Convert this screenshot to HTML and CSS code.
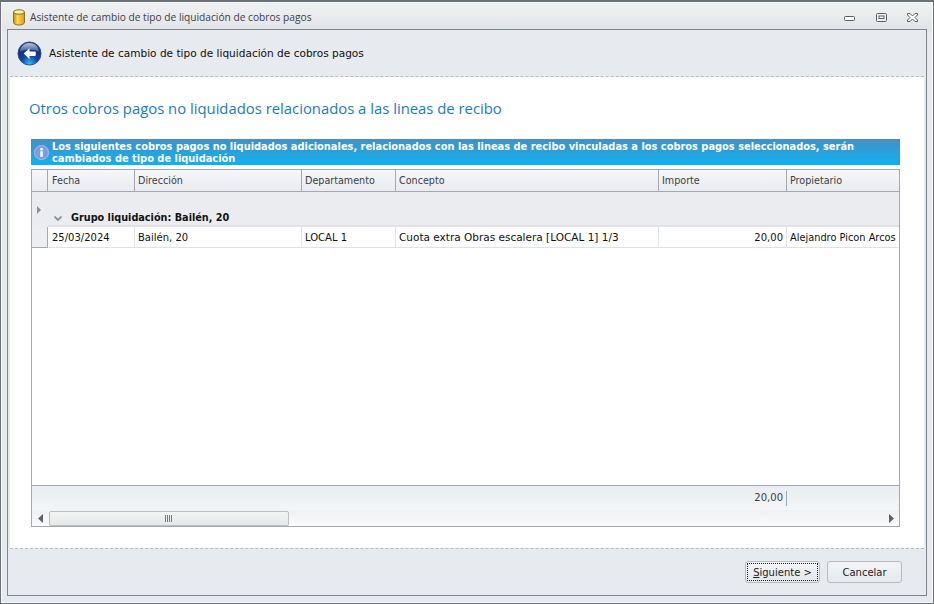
FILE: index.html
```html
<!DOCTYPE html>
<html lang="es">
<head>
<meta charset="utf-8">
<title>Asistente de cambio de tipo de liquidación de cobros pagos</title>
<link rel="stylesheet" href="styles.css">
</head>
<body>
<div class="window">
  <div class="titlebar">
    <svg class="app-icon" width="14" height="17" viewBox="0 0 14 17">
      <defs><linearGradient id="cyl" x1="0" x2="1" y1="0" y2="0"><stop offset="0" stop-color="#c08e14"/><stop offset=".35" stop-color="#fbd550"/><stop offset="1" stop-color="#d99c12"/></linearGradient></defs>
      <path d="M1.500 3v10.500c0 1.300 2.400 2.500 5.500 2.500s5.500-1.200 5.500-2.500V3z" fill="url(#cyl)" stroke="#8f7020"/>
      <ellipse cx="7" cy="3" rx="5.500" ry="2.200" fill="#fdf0a8" stroke="#8f7020"/>
    </svg>
    <span class="title">Asistente de cambio de tipo de liquidación de cobros pagos</span>
    <div class="controls">
      <svg class="ctl-min" width="11" height="6" viewBox="0 0 11 6"><rect x=".5" y=".5" width="10" height="4" rx="1" fill="#fff" stroke="#5c6066"/></svg>
      <svg class="ctl" width="11" height="9" viewBox="0 0 11 9"><rect x=".5" y=".5" width="10" height="8" rx="1" fill="#eef0f2" stroke="#5c6066"/><rect x="3" y="3" width="5" height="2.500" fill="#fff" stroke="#5c6066" stroke-width="1"/></svg>
      <svg class="ctl" width="11" height="9" viewBox="0 0 11 9"><path d="M.5.5h2.500L5.500 3 8 .5h2.500v1.500L8 4.500 10.500 7v1.500H8L5.500 6 3 8.500H.5V7L3 4.500.5 2z" fill="#fff" stroke="#5c6066" stroke-linejoin="round"/></svg>
    </div>
  </div>
  <div class="panel">
    <div class="wizard-head">
      <svg class="back" width="25" height="25" viewBox="0 0 26 26">
        <defs>
          <radialGradient id="orb" cx=".5" cy=".95" r=".8"><stop offset="0" stop-color="#2cc4f4"/><stop offset=".45" stop-color="#1244a6"/><stop offset="1" stop-color="#16296b"/></radialGradient>
          <linearGradient id="gloss" x1="0" x2="0" y1="0" y2="1"><stop offset="0" stop-color="#d4dff2"/><stop offset="1" stop-color="#4465ac"/></linearGradient>
        </defs>
        <circle cx="13" cy="13" r="12" fill="url(#orb)" stroke="#3c4f80" stroke-width="1"/>
        <path d="M3 11C3.500 5.500 8 2 13 2s9.500 3.500 10 9c-5-2.500-15-2.500-20 0z" fill="url(#gloss)" opacity=".85"/>
        <path d="M7 13l6-5.500V11h5.500q1 0 1 1v2.500q0 1-1 1H13V19z" fill="#fff"/>
      </svg>
      <span class="head-text">Asistente de cambio de tipo de liquidación de cobros pagos</span>
    </div>
    <div class="content">
      <h1 class="heading">Otros cobros pagos no liquidados relacionados a las lineas de recibo</h1>
      <div class="banner">
        <svg class="info" width="15" height="15" viewBox="0 0 15 15">
          <circle cx="7.500" cy="7.500" r="7" fill="#7d9be0" stroke="#a9bdec"/>
          <rect x="6.300" y="6.300" width="2.500" height="5.500" fill="#fff"/>
          <circle cx="7.500" cy="4.200" r="1.400" fill="#fff"/>
        </svg>
        <p class="banner-text">Los siguientes cobros pagos no liquidados adicionales, relacionados con las lineas de recibo vinculadas a los cobros pagos seleccionados, serán cambiados de tipo de liquidación</p>
      </div>
      <div class="grid">
        <div class="grid-main">
          <div class="indicator">
            <div class="ind-head"></div>
            <div class="ind-group"><svg width="4" height="8" viewBox="0 0 4 8"><path d="M0 0l4 4-4 4z" fill="#8a9099"/></svg></div>
            <div class="ind-row"></div>
          </div>
          <div class="grid-cols">
            <div class="row head-row">
              <div class="hcell first">Fecha</div><div class="hcell">Dirección</div><div class="hcell">Departamento</div><div class="hcell">Concepto</div><div class="hcell">Importe</div><div class="hcell last">Propietario</div>
            </div>
            <div class="group-row">
              <svg width="8" height="5" viewBox="0 0 8 5"><path d="M.5.500L4 4 7.500.5" fill="none" stroke="#8a9099" stroke-width="1.800"/></svg>
              <span>Grupo liquidación: Bailén, 20</span>
            </div>
            <div class="row data-row">
              <div class="cell first">25/03/2024</div><div class="cell">Bailén, 20</div><div class="cell">LOCAL 1</div><div class="cell wide">Cuota extra Obras escalera [LOCAL 1] 1/3</div><div class="cell num">20,00</div><div class="cell last">Alejandro Picon Arcos</div>
            </div>
          </div>
        </div>
        <div class="summary">
          <span class="sum-value">20,00</span>
        </div>
        <div class="scrollbar">
          <svg class="arrow" width="5" height="9" viewBox="0 0 5 9"><path d="M5 0L0 4.500 5 9z" fill="#5f6368"/></svg>
          <div class="track">
            <div class="thumb"><svg width="8" height="7" viewBox="0 0 8 7"><path d="M.5 0v7M2.500 0v7M4.500 0v7M6.500 0v7" stroke="#777c82"/></svg></div>
          </div>
          <svg class="arrow" width="5" height="9" viewBox="0 0 5 9"><path d="M0 0l5 4.500L0 9z" fill="#5f6368"/></svg>
        </div>
      </div>
    </div>
    <div class="wizard-foot">
      <button class="btn default"><span class="focus"><u>S</u>iguiente &gt;</span></button>
      <button class="btn plain">Cancelar</button>
    </div>
  </div>
</div>
</body>
</html>
```
FILE: styles.css
```css
* { box-sizing: border-box; }
html, body { margin: 0; padding: 0; }
body { width: 934px; height: 604px; overflow: hidden; font-family: "DejaVu Sans", sans-serif; font-size: 10px; color: #1a1a1a; }
.window { width: 934px; height: 604px; display: flex; flex-direction: column; padding: 0 6px 7px; background: linear-gradient(#f0f1f3, #e1e4e7 29px, #e6e9ed 30px); border: 1px solid #6b7279; border-top-width: 2px; box-shadow: inset 0 0 0 1px #f7f8f9; }
.titlebar { height: 27px; flex: none; display: flex; align-items: center; padding: 3px 0 0 5px; }
.app-icon { flex: none; }
.title { margin-left: 4px; color: #3c4148; font-family: "Open Sans", sans-serif; font-size: 10.2px; }
.controls { margin-left: auto; display: flex; align-items: center; gap: 20px; padding-right: 9px; }
.ctl-min { margin: 3px 1px 0 0; }
.panel { flex: 1; min-height: 0; display: flex; flex-direction: column; border: 1px solid #808589; background: #e7eaee; }
.wizard-head { height: 47px; flex: none; display: flex; align-items: center; padding-left: 7px; gap: 7px; border-bottom: 1px dashed #b9bdc2; margin: 0 2px; }
.back { flex: none; }
.head-text { color: #101010; font-size: 10.55px; }
.content { flex: 1; min-height: 0; margin: 0 2px; background: #fff; display: flex; flex-direction: column; padding: 0 24px 21px 21px; }
.heading { margin: 22px 0 0 -2px; height: 40px; font-family: "Open Sans", sans-serif; font-weight: 400; font-size: 14.85px; line-height: 18px; color: #1c7cc0; }
.banner { height: 26px; flex: none; display: flex; align-items: center; padding-left: 3px; gap: 3px; background: linear-gradient(#4590c4, #0eb1f1); }
.info { flex: none; }
.banner-text { margin: 2px 0 0; font-size: 9.85px; line-height: 12px; font-weight: 700; color: #fff; }
.grid { flex: 1; min-height: 0; margin-top: 4px; border: 1px solid #a4a8b4; display: flex; flex-direction: column; }
.grid-main { flex: 1; min-height: 0; display: flex; }
.indicator { width: 16px; flex: none; display: flex; flex-direction: column; }
.ind-head { height: 22px; background: linear-gradient(#f6f7f9, #e9ebef); border-right: 1px solid #a4a8b4; border-bottom: 1px solid #a4a8b4; }
.ind-group { height: 35px; display: flex; align-items: center; justify-content: center; background: #ebecef; padding-right: 2px; }
.ind-row { height: 21px; background: #eceef1; border-right: 1px solid #a4a8b4; border-bottom: 1px solid #a4a8b4; }
.grid-cols { flex: 1; min-width: 0; }
.row { display: grid; grid-template-columns: 87px 167px 94px 263px 128px 1fr; }
.head-row { height: 22px; background: linear-gradient(#f6f7f9, #e9ebef); border-bottom: 1px solid #a4a8b4; }
.hcell { padding: 4px 0 0 3px; border-right: 1px solid #a4a8b4; color: #3a4048; line-height: 14px; font-size: 9.6px; }
.hcell.first, .cell.first { padding-left: 4px; }
.hcell.last, .cell.last { border-right: 0; }
.group-row { height: 35px; display: flex; align-items: flex-end; gap: 9px; padding: 0 0 0 6px; background: #ebecef; font-weight: 700; font-size: 9.7px; color: #111; border-bottom: 2px solid #e0e2e5; }
.group-row svg { margin-bottom: 4px; }
.group-row span { line-height: 14px; }
.data-row { height: 21px; border-bottom: 1px solid #dfe1e4; }
.cell { padding: 4px 0 0 3px; border-right: 1px solid #e3e4e7; line-height: 14px; color: #111; white-space: nowrap; overflow: hidden; }
.cell.wide { font-size: 10.5px; padding-top: 3px; }
.cell.num { text-align: right; padding: 4px 3px 0 0; }
.cell.last { font-size: 9.8px; }
.summary { height: 25px; flex: none; display: flex; justify-content: flex-end; padding: 5px 112px 0 0; border-top: 1px solid #a4a8b4; background: linear-gradient(#eaedf1, #f3f5f7); }
.sum-value { width: 60px; height: 15px; line-height: 14px; text-align: right; padding-right: 3px; border-right: 1px solid #a4a8b4; color: #3a4048; }
.scrollbar { height: 16px; flex: none; display: flex; align-items: center; padding: 0 5px 0 6px; gap: 6px; background: linear-gradient(#eef0f2, #fafafb); }
.track { flex: 1; height: 15px; }
.thumb { width: 240px; height: 15px; display: flex; align-items: center; justify-content: center; border: 1px solid #bcbfc3; border-radius: 2px; background: linear-gradient(#f3f4f4, #e6e7e7); }
.wizard-foot { height: 47px; flex: none; margin: 0 2px; display: flex; justify-content: flex-end; gap: 7px; padding: 12px 22px 0 0; border-top: 1px dashed #b9bdc2; }
.btn { width: 75px; height: 22px; padding: 0; font: inherit; color: #222; border: 1px solid #b8bcc2; border-radius: 3px; background: linear-gradient(#f2f4f6, #e6e9ed); }
.btn.default { padding: 1px; }
.btn.plain { padding-top: 1px; }
.focus { display: block; height: 18px; line-height: 18px; border: 1px dotted #222; }
```
